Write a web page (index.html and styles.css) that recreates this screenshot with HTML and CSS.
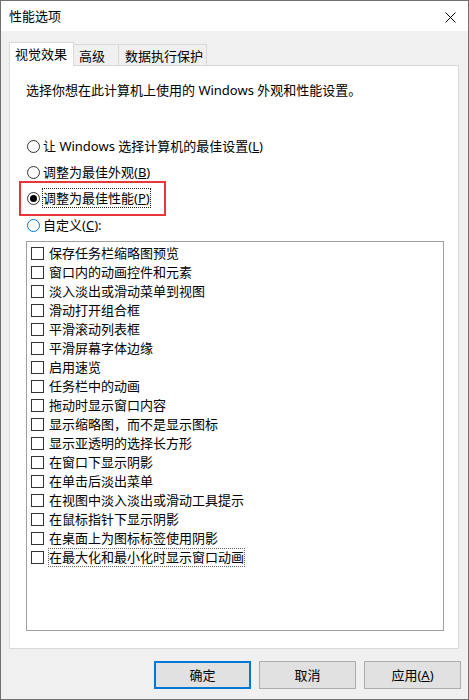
FILE: index.html
```html
<!DOCTYPE html>
<html lang="zh-CN">
<head>
<meta charset="utf-8">
<title>性能选项</title>
<link rel="stylesheet" href="styles.css">
</head>
<body>
<div class="window">
  <div class="titlebar">
    <span class="title">性能选项</span>
    <svg class="close" width="11" height="11" viewBox="0 0 11 11"><path d="M0.5 0.5 L10.5 10.5 M10.5 0.5 L0.5 10.5" stroke="#000" stroke-width="1" fill="none"/></svg>
  </div>
  <div class="body">
    <div class="tabs">
      <div class="tab tab-active">视觉效果</div>
      <div class="tab tab-adv">高级</div>
      <div class="tab tab-dep">数据执行保护</div>
    </div>
    <div class="panel">
      <p class="desc">选择你想在此计算机上使用的 Windows 外观和性能设置。</p>
      <div class="radios">
        <div class="radio"><span class="circle"></span><span class="rtext">让 Windows 选择计算机的最佳设置(<u>L</u>)</span></div>
        <div class="radio"><span class="circle"></span><span class="rtext">调整为最佳外观(<u>B</u>)</span></div>
        <div class="radio radio-marked"><span class="circle circle-on"></span><span class="rtext focus">调整为最佳性能(<u>P</u>)</span></div>
        <div class="radio"><span class="circle circle-hover"></span><span class="rtext">自定义(<u>C</u>):</span></div>
      </div>
      <div class="list">
        <div class="item"><span class="box"></span><span>保存任务栏缩略图预览</span></div>
        <div class="item"><span class="box"></span><span>窗口内的动画控件和元素</span></div>
        <div class="item"><span class="box"></span><span>淡入淡出或滑动菜单到视图</span></div>
        <div class="item"><span class="box"></span><span>滑动打开组合框</span></div>
        <div class="item"><span class="box"></span><span>平滑滚动列表框</span></div>
        <div class="item"><span class="box"></span><span>平滑屏幕字体边缘</span></div>
        <div class="item"><span class="box"></span><span>启用速览</span></div>
        <div class="item"><span class="box"></span><span>任务栏中的动画</span></div>
        <div class="item"><span class="box"></span><span>拖动时显示窗口内容</span></div>
        <div class="item"><span class="box"></span><span>显示缩略图，而不是显示图标</span></div>
        <div class="item"><span class="box"></span><span>显示亚透明的选择长方形</span></div>
        <div class="item"><span class="box"></span><span>在窗口下显示阴影</span></div>
        <div class="item"><span class="box"></span><span>在单击后淡出菜单</span></div>
        <div class="item"><span class="box"></span><span>在视图中淡入淡出或滑动工具提示</span></div>
        <div class="item"><span class="box"></span><span>在鼠标指针下显示阴影</span></div>
        <div class="item"><span class="box"></span><span>在桌面上为图标标签使用阴影</span></div>
        <div class="item"><span class="box"></span><span class="item-focus">在最大化和最小化时显示窗口动画</span></div>
      </div>
    </div>
    <div class="buttons">
      <div class="btn btn-default">确定</div>
      <div class="btn">取消</div>
      <div class="btn">应用(<u>A</u>)</div>
    </div>
  </div>
</div>
</body>
</html>
```

FILE: styles.css
```css
* { box-sizing: border-box; }
html, body { margin: 0; padding: 0; }
body {
  font-family: "Noto Sans", "Noto Sans CJK SC", sans-serif;
  font-size: 13px;
  color: #000;
  background: #fff;
}
.window {
  width: 469px;
  height: 700px;
  border: 1px solid #707070;
  background: #f0f0f0;
  display: flex;
  flex-direction: column;
}
.titlebar {
  height: 30px;
  background: #fff;
  display: flex;
  align-items: center;
  justify-content: space-between;
  padding: 0 12px 0 8px;
  flex: none;
}
.title { line-height: 20px; }
.close { display: block; margin-top: 2px; }
.body {
  padding: 11px 7px 0 8px;
  display: flex;
  flex-direction: column;
  flex: 1;
}
.tabs {
  display: flex;
  align-items: flex-end;
}
.tab {
  border: 1px solid #d9d9d9;
  border-bottom: none;
  background: #f0f0f0;
  white-space: nowrap;
}
.tab-active {
  position: relative;
  z-index: 1;
  width: 65px;
  height: 24px;
  margin-bottom: -1px;
  padding-left: 5px;
  line-height: 22px;
  background: #fff;
}
.tab-adv, .tab-dep {
  height: 21px;
  padding-top: 2px;
  line-height: 18px;
  border-left: none;
}
.tab-adv { width: 45px; padding-left: 5px; }
.tab-dep { width: 88px; padding-left: 6px; }
.panel {
  width: 450px;
  background: #fff;
  border: 1px solid #d9d9d9;
  padding: 14px 16px 17px 16px;
}
.desc {
  margin: 0;
  line-height: 20px;
}
.radios {
  margin-top: 36px;
  display: flex;
  flex-direction: column;
  gap: 6px;
}
.radio {
  position: relative;
  height: 20px;
  margin-left: 1px;
  display: flex;
  align-items: center;
  gap: 3px;
  white-space: nowrap;
}
.radio:nth-child(4) { margin-top: 1px; }
.circle {
  width: 13px;
  height: 13px;
  border: 1px solid #333;
  border-radius: 50%;
  background: #fff;
  flex: none;
  display: flex;
  align-items: center;
  justify-content: center;
}
.circle-on::after {
  content: "";
  width: 7px;
  height: 7px;
  border-radius: 50%;
  background: #000;
}
.circle-hover { border-color: #0078d7; }
.rtext { line-height: 18px; }
.focus {
  display: inline-block;
  outline: 1px dotted #222;
}
.radio-marked::after {
  content: "";
  position: absolute;
  left: -8px;
  top: -7px;
  width: 143px;
  height: 31px;
  border: 2px solid #e8373a;
}
.list {
  margin-top: 6px;
  width: 418px;
  height: 390px;
  border: 1px solid #a0a0a0;
  padding: 2px 0 0 4px;
}
.item {
  height: 19px;
  display: flex;
  align-items: center;
  gap: 5px;
  white-space: nowrap;
  line-height: 19px;
}
.item-focus {
  line-height: 17px;
  outline: 1px dotted #666;
}
.box {
  width: 13px;
  height: 13px;
  border: 1px solid #333;
  background: #fff;
  flex: none;
}
.buttons {
  margin-top: 12px;
  display: flex;
  justify-content: flex-end;
  gap: 8px;
}
.btn {
  width: 97px;
  height: 28px;
  background: #e1e1e1;
  border: 1px solid #adadad;
  display: flex;
  align-items: center;
  justify-content: center;
  line-height: 18px;
}
.btn-default {
  border: 2px solid #0078d7;
}
```
